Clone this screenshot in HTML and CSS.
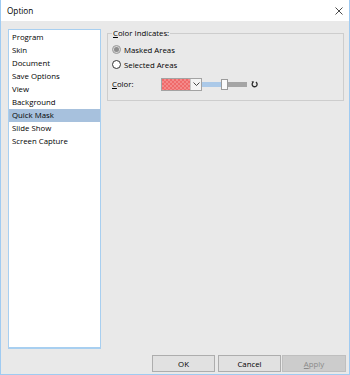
FILE: index.html
```html
<!DOCTYPE html>
<html>
<head>
<meta charset="utf-8">
<link rel="stylesheet" href="styles.css">
</head>
<body>
<div class="window">
  <div class="titlebar">
    <span class="title">Option</span>
    <svg class="close" width="8" height="8" viewBox="0 0 8 8"><path d="M0.5 0.5 L7.5 7.5 M7.5 0.5 L0.5 7.5" stroke="#4a4a4a" stroke-width="1" fill="none"/></svg>
  </div>
  <div class="main">
    <ul class="list">
      <li>Program</li>
      <li>Skin</li>
      <li>Document</li>
      <li>Save Options</li>
      <li>View</li>
      <li>Background</li>
      <li class="selected">Quick Mask</li>
      <li>Slide Show</li>
      <li>Screen Capture</li>
    </ul>
    <div class="panel">
      <fieldset class="group">
        <legend class="legend"><u>C</u>olor Indicates:</legend>
        <div class="radio-row"><span class="radio checked"><span class="dot"></span></span><span>Masked Areas</span></div>
        <div class="radio-row"><span class="radio"></span><span>Selected Areas</span></div>
        <div class="color-row">
          <span class="color-label"><u>C</u>olor:</span>
          <div class="combo">
            <span class="swatch"></span>
            <span class="arrow"><svg width="7" height="4" viewBox="0 0 7 4"><path d="M0.5 0.5 L3.5 3.5 L6.5 0.5" stroke="#333" stroke-width="0.9" fill="none"/></svg></span>
          </div>
          <div class="slider">
            <span class="track-fill"></span>
            <span class="thumb"></span>
            <span class="track-rest"></span>
          </div>
          <svg class="reset" width="7" height="7" viewBox="0 0 7 7"><path d="M2.2 1.2 A2.5 2.5 0 1 0 4.9 1.1" stroke="#2a2a2a" stroke-width="1.3" fill="none"/><path d="M0.6 0.2 L3.2 0.4 L1.6 2.6 Z" fill="#2a2a2a"/></svg>
        </div>
      </fieldset>
    </div>
  </div>
  <div class="footer">
    <button class="btn">OK</button>
    <button class="btn btn-cancel">Cancel</button>
    <button class="btn btn-apply" disabled><u>A</u>pply</button>
  </div>
</div>
</body>
</html>
```
FILE: styles.css
```css
* { box-sizing: border-box; }
html, body { margin: 0; padding: 0; }
body {
  font-family: "Open Sans", "Noto Sans", sans-serif;
  font-size: 7.8px;
  color: #000;
  background: #e9e9e9;
}
.window {
  width: 350px;
  height: 375px;
  border: 1px solid #9fcbf2;
  border-top: none;
  background: #e9e9e9;
  display: flex;
  flex-direction: column;
}
.titlebar {
  height: 21px;
  flex: none;
  background: #ffffff;
  display: flex;
  align-items: center;
  justify-content: space-between;
  padding: 0 6px 1px 6px;
}
.title { font-size: 8.2px; color: #000; }
.close { display: block; margin-top: 1px; }
.main {
  height: 328px;
  flex: none;
  display: flex;
  gap: 6px;
  padding: 6px 5px 0 7px;
}
.list {
  list-style: none;
  margin: 2px 0 0 0;
  padding: 1px 0 0 0;
  width: 93px;
  height: 320px;
  flex: none;
  background: #ffffff;
  border: 1px solid #a8cff0;
  border-bottom-width: 2px;
}
.list li {
  height: 13px;
  line-height: 13px;
  padding-left: 3px;
  white-space: nowrap;
}
.list li.selected { background: #a7c1dd; }
.panel { flex: 1; min-width: 0; }
.group {
  margin: 0;
  width: 237px;
  border: 1px solid #cdcdcd;
  padding: 2px 4px 9px 4px;
}
.legend {
  padding: 0 1px;
  height: 13px;
  line-height: 13px;
}
.radio-row {
  height: 15px;
  display: flex;
  align-items: center;
  gap: 3px;
}
.radio {
  width: 9px;
  height: 9px;
  border-radius: 50%;
  border: 1px solid #333;
  background: #fff;
  display: flex;
  align-items: center;
  justify-content: center;
  flex: none;
}
.radio.checked {
  border-color: #9a9a9a;
  background: #d6d6d6;
}
.dot {
  width: 5px;
  height: 5px;
  border-radius: 50%;
  background: #8e8e8e;
}
.color-row {
  margin-top: 5px;
  height: 14px;
  display: flex;
  align-items: center;
}
.color-label { width: 49px; flex: none; }
.combo {
  display: flex;
  width: 41px;
  height: 13px;
  border: 1px solid #a3a3a3;
  background: #fff;
  flex: none;
}
.swatch {
  width: 28px;
  height: 100%;
  background-color: #f06a6a;
  background-image:
    linear-gradient(45deg, #f48a8a 25%, transparent 25%, transparent 75%, #f48a8a 75%),
    linear-gradient(45deg, #f48a8a 25%, transparent 25%, transparent 75%, #f48a8a 75%);
  background-size: 4px 4px;
  background-position: 0 0, 2px 2px;
}
.arrow {
  flex: 1;
  display: flex;
  align-items: center;
  justify-content: center;
  border-left: 1px solid #c8c8c8;
  background: #f4f4f4;
}
.arrow svg { display: block; }
.slider {
  display: flex;
  align-items: center;
  margin-left: 0;
  height: 12px;
}
.track-fill {
  width: 19px;
  height: 5px;
  background: #abc9e8;
}
.thumb {
  width: 7px;
  height: 11px;
  background: #fbfbfb;
  border: 1px solid #9b9b9b;
}
.track-rest {
  width: 19px;
  height: 5px;
  background: #a5a5a5;
}
.reset { display: block; margin-left: 4px; }
.footer {
  flex: none;
  display: flex;
  justify-content: flex-end;
  padding: 6px 3px 0 0;
}
.btn {
  font-family: inherit;
  font-size: 7.8px;
  color: #000;
  height: 17px;
  width: 63px;
  margin: 0;
  padding: 0;
  background: #e1e1e1;
  border: 1px solid #adadad;
  border-radius: 0;
}
.btn-cancel { margin-left: 3px; }
.btn-apply {
  margin-left: 1px;
  width: 64px;
  background: #cccccc;
  border-color: #bfbfbf;
  color: #8a8a8a;
}
u { text-decoration: underline; text-underline-offset: 1px; }
```
